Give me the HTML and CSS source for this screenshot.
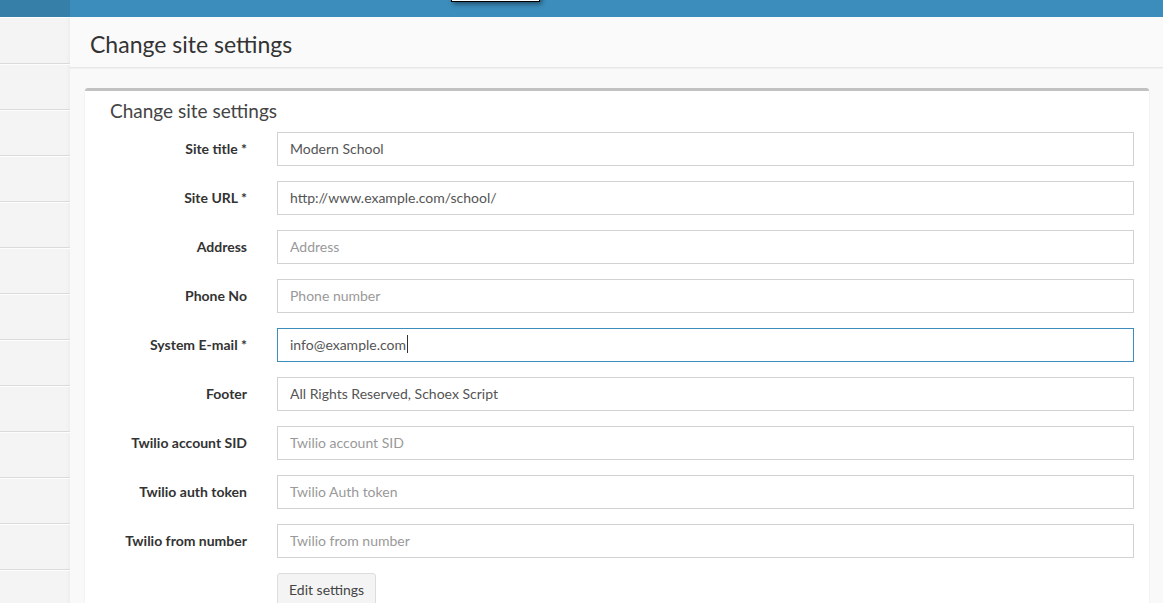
FILE: index.html
```html
<!DOCTYPE html>
<html>
<head>
<meta charset="utf-8">
<link rel="stylesheet" href="styles.css">
</head>
<body>
<header class="topbar">
  <div class="topbar-logo"></div>
  <div class="topbar-nav"></div>
  <div class="popup-edge"></div>
</header>
<div class="layout">
  <aside class="sidebar">
    <div class="side-item"></div><div class="side-item"></div><div class="side-item"></div>
    <div class="side-item"></div><div class="side-item"></div><div class="side-item"></div>
    <div class="side-item"></div><div class="side-item"></div><div class="side-item"></div>
    <div class="side-item"></div><div class="side-item"></div><div class="side-item"></div>
    <div class="side-item"></div>
  </aside>
  <main class="content">
    <div class="content-header"><h1>Change site settings</h1></div>
    <section class="box">
      <h3 class="box-title">Change site settings</h3>
      <form class="form">
        <label class="lbl">Site title *</label>
        <input class="field" type="text" value="Modern School">
        <label class="lbl">Site URL *</label>
        <input class="field" type="text" value="http://www.example.com/school/">
        <label class="lbl">Address</label>
        <input class="field" type="text" placeholder="Address">
        <label class="lbl">Phone No</label>
        <input class="field" type="text" placeholder="Phone number">
        <label class="lbl">System E-mail *</label>
        <div class="field field-focus"><span>info@example.com</span><span class="caret"></span></div>
        <label class="lbl">Footer</label>
        <input class="field" type="text" value="All Rights Reserved, Schoex Script">
        <label class="lbl">Twilio account SID</label>
        <input class="field" type="text" placeholder="Twilio account SID">
        <label class="lbl">Twilio auth token</label>
        <input class="field" type="text" placeholder="Twilio Auth token">
        <label class="lbl">Twilio from number</label>
        <input class="field" type="text" placeholder="Twilio from number">
        <span></span>
        <div><button class="btn" type="button">Edit settings</button></div>
      </form>
    </section>
  </main>
</div>
</body>
</html>
```
FILE: styles.css
```css
* { box-sizing: border-box; }
html, body { margin: 0; padding: 0; }
body {
  font-family: Lato, "Noto Sans", sans-serif;
  background: #f9f9f9;
  color: #333;
  width: 1163px;
  height: 603px;
  overflow: hidden;
}
.topbar {
  position: relative;
  display: flex;
  height: 17px;
}
.topbar-logo { width: 70px; background: #367fa9; }
.topbar-nav { flex: 1; background: #3c8dbc; }
.popup-edge {
  position: absolute;
  left: 451px;
  top: -30px;
  width: 89px;
  height: 32px;
  background: #fff;
  border: 1px solid #000;
  box-shadow: 2px 2px 5px rgba(0,0,0,0.45);
}
.layout { display: flex; }
.sidebar {
  width: 70px;
  flex: none;
  background: #f4f4f4;
  box-shadow: inset -4px 0 4px -3px rgba(0,0,0,0.04);
}
.side-item {
  height: 46px;
  border-top: 1px solid #fdfdfd;
  border-bottom: 1px solid #dbdbdb;
}
.side-item:first-child { height: 47px; }
.content { flex: 1; }
.content-header {
  height: 51px;
  background: #fafafa;
  border-bottom: 1px solid #e6e6e6;
  box-shadow: 0 1px 1px rgba(0,0,0,0.03);
  padding: 0 20px;
  display: flex;
  align-items: center;
}
.content-header h1 {
  margin: 0;
  font-size: 23px;
  font-weight: 400;
  color: #333;
  padding-top: 4px;
}
.box {
  margin: 20px 14px 0 15px;
  background: #fff;
  border-top: 3px solid #c1c1c1;
  border-radius: 3px;
  box-shadow: 0 1px 2px rgba(0,0,0,0.08);
  padding: 0 15px 30px 0;
}
.box-title {
  margin: 0;
  padding: 8px 0 0 25px;
  height: 41px;
  font-size: 19px;
  font-weight: 400;
  color: #444;
}
.form {
  display: grid;
  grid-template-columns: 162px 1fr;
  column-gap: 30px;
  row-gap: 15px;
  align-items: center;
}
.lbl {
  text-align: right;
  font-weight: 700;
  font-size: 14px;
  color: #333;
  padding-bottom: 2px;
}
.field {
  height: 34px;
  border: 1px solid #d2d2d2;
  padding: 0 12px 2px;
  font-family: inherit;
  font-size: 14px;
  color: #555;
  background: #fff;
  outline: none;
  width: 100%;
  border-radius: 0;
}
.field::placeholder { color: #999; }
.field-focus {
  border-color: #3c8dbc;
  display: flex;
  align-items: center;
}
.caret {
  display: inline-block;
  width: 1px;
  height: 18px;
  background: #333;
  margin-left: 1px;
}
.btn {
  height: 34px;
  padding: 0 11px 2px;
  font-family: inherit;
  font-size: 14px;
  color: #444;
  background: #f4f4f4;
  border: 1px solid #ddd;
  border-radius: 3px;
}
```
